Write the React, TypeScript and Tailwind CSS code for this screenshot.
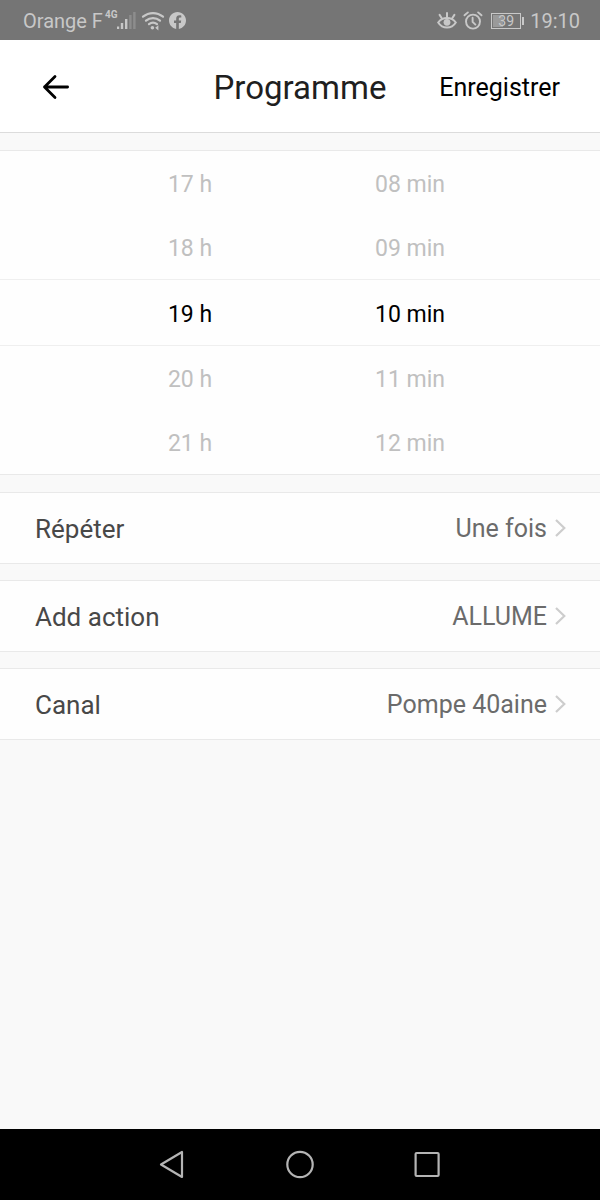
import { useState } from "react";

const HOURS = ["17 h", "18 h", "19 h", "20 h", "21 h"];
const MINUTES = ["08 min", "09 min", "10 min", "11 min", "12 min"];

const SETTINGS = [
  { id: "repeat", label: "Répéter", value: "Une fois" },
  { id: "action", label: "Add action", value: "ALLUME" },
  { id: "channel", label: "Canal", value: "Pompe 40aine" },
];

function SignalIcon() {
  return (
    <svg className="w-5 h-5" viewBox="0 0 20 20" fill="currentColor">
      <rect x="0" y="15.5" width="2.2" height="2.5" />
      <rect x="3.8" y="12" width="2.4" height="6" />
      <rect x="8" y="8" width="2.4" height="10" />
      <rect x="12.2" y="4" width="2.4" height="14" opacity="0.3" />
      <rect x="16.2" y="1" width="2.4" height="17" opacity="0.3" />
    </svg>
  );
}

function WifiIcon() {
  return (
    <svg
      className="w-6 h-5"
      viewBox="0 0 24 20"
      fill="none"
      stroke="currentColor"
      strokeWidth="2.2"
      strokeLinecap="round"
    >
      <path d="M2 5.7C8 0.9 16 0.9 22 5.7" />
      <path d="M5 9.7C9 6.2 15 6.2 19 9.7" />
      <path d="M8 13.2C10.4 11.2 13.6 11.2 16 13.2" />
      <circle cx="11.4" cy="16.8" r="1.8" fill="currentColor" stroke="none" />
      <path d="M14.2 16.8l3.2-2.6v5.2z" fill="currentColor" stroke="none" />
    </svg>
  );
}

function FacebookIcon() {
  return (
    <svg className="w-[17px] h-[17px]" viewBox="0 0 24 24" fill="currentColor">
      <path d="M24 12.07C24 5.4 18.63 0 12 0S0 5.4 0 12.07c0 6.03 4.39 11.02 10.13 11.93v-8.44H7.08v-3.49h3.05V9.41c0-3.02 1.79-4.69 4.53-4.69 1.31 0 2.68.24 2.68.24v2.97h-1.51c-1.49 0-1.95.93-1.95 1.88v2.26h3.32l-.53 3.49h-2.79V24C19.61 23.09 24 18.1 24 12.07z" />
    </svg>
  );
}

function EyeIcon() {
  return (
    <svg
      className="w-5 h-5"
      viewBox="0 0 20 20"
      fill="none"
      stroke="currentColor"
      strokeWidth="2"
      strokeLinecap="round"
    >
      <path d="M1.2 11.5C5.5 5.5 14.5 5.5 18.8 11.5C14.5 18.3 5.5 18.3 1.2 11.5z" />
      <path d="M10 1.9v4M2.6 3.9l2.2 3.4M17.4 3.9l-2.2 3.4" />
      <circle cx="10" cy="11.3" r="3.4" fill="currentColor" stroke="none" />
    </svg>
  );
}

function AlarmIcon() {
  return (
    <svg
      className="w-5 h-5"
      viewBox="0 0 20 20"
      fill="none"
      stroke="currentColor"
      strokeWidth="1.9"
      strokeLinecap="round"
    >
      <circle cx="10" cy="10.6" r="7" />
      <path d="M9.6 6.8v4l2.8 2.8M1.5 4.3L4.9 1.4M18.5 4.3L15.1 1.4" />
    </svg>
  );
}

function Battery() {
  return (
    <div className="flex items-center gap-px">
      <div className="relative flex items-center justify-center w-[30px] h-4 border border-current">
        <div className="absolute inset-y-px left-px w-2.5 bg-[#9a9a9a]" />
        <span className="relative text-[14px] leading-none">39</span>
      </div>
      <div className="w-0.5 h-2 bg-current" />
    </div>
  );
}

function StatusBar() {
  return (
    <div className="flex items-center justify-between h-10 pt-px pl-[23px] pr-5 bg-[#757575] text-[#c8c8c8]">
      <div className="flex items-center">
        <span className="text-xl leading-6">Orange F</span>
        <span className="self-start ml-0.5 text-[10px] leading-3 font-bold">
          4G
        </span>
        <SignalIcon />
        <div className="flex items-center gap-1 ml-1">
          <WifiIcon />
          <FacebookIcon />
        </div>
      </div>
      <div className="flex items-center gap-1.5">
        <div className="flex items-center gap-1.5 pr-0.5">
          <EyeIcon />
          <AlarmIcon />
        </div>
        <Battery />
        <span className="text-xl leading-6">19:10</span>
      </div>
    </div>
  );
}

function Header() {
  return (
    <header className="grid grid-cols-[1fr_auto_1fr] items-center h-[93px] px-10 bg-white border-b border-[#dcdcdc]">
      <button type="button" aria-label="Retour" className="justify-self-start">
        <svg
          className="w-8 h-8"
          viewBox="0 0 32 32"
          fill="none"
          stroke="black"
          strokeWidth="2.8"
          strokeLinecap="round"
          strokeLinejoin="round"
        >
          <path d="M15 6.6L4.5 17L15 27.4M4.5 17H27.6" />
        </svg>
      </button>
      <h1 className="pt-1 text-[33px] leading-10 text-[#1f1f1f]">Programme</h1>
      <button
        type="button"
        className="justify-self-end pt-1 text-[25px] leading-8 text-black"
      >
        Enregistrer
      </button>
    </header>
  );
}

function TimePicker() {
  const [hour, setHour] = useState(2);
  const [minute, setMinute] = useState(2);

  return (
    <div className="flex flex-col bg-[#fefefe] border-y border-[#e9e9e9]">
      {HOURS.map((h, i) => (
        <div
          key={h}
          className={
            i === 2
              ? "grid grid-cols-2 h-[67px] px-20 border-y border-[#efefef]"
              : "grid grid-cols-2 h-16 px-20"
          }
        >
          <button
            type="button"
            onClick={() => setHour(i)}
            className={
              i === hour
                ? "pt-1 text-[23px] leading-8 text-black"
                : "pt-1 text-[23px] leading-8 text-[#c0c0c0]"
            }
          >
            {h}
          </button>
          <button
            type="button"
            onClick={() => setMinute(i)}
            className={
              i === minute
                ? "pt-1 text-[23px] leading-8 text-black"
                : "pt-1 text-[23px] leading-8 text-[#c0c0c0]"
            }
          >
            {MINUTES[i]}
          </button>
        </div>
      ))}
    </div>
  );
}

function SettingRow({ label, value }: { label: string; value: string }) {
  return (
    <button
      type="button"
      className="flex items-center justify-between w-full h-[72px] pl-[35px] pr-8 bg-[#fefefe] border-y border-[#e9e9e9]"
    >
      <span className="pt-0.5 text-[26px] leading-8 text-[#484848]">
        {label}
      </span>
      <span className="flex items-center gap-1.5">
        <span className="pt-0.5 text-[25px] leading-8 text-[#6b6b6b]">
          {value}
        </span>
        <svg
          className="w-[15px] h-5"
          viewBox="0 0 15 20"
          fill="none"
          stroke="#cdcdcd"
          strokeWidth="2.2"
        >
          <path d="M3 2L11.3 10L3 18" />
        </svg>
      </span>
    </button>
  );
}

function NavBar() {
  return (
    <nav className="flex justify-center h-[71px] bg-black text-[#b4b4b4]">
      <button
        type="button"
        aria-label="Précédent"
        className="flex items-center justify-center w-32"
      >
        <svg
          className="w-8 h-8"
          viewBox="0 0 32 32"
          fill="none"
          stroke="currentColor"
          strokeWidth="2.2"
          strokeLinejoin="round"
        >
          <path d="M26 3V28L5 15.5z" />
        </svg>
      </button>
      <button
        type="button"
        aria-label="Accueil"
        className="flex items-center justify-center w-32"
      >
        <svg
          className="w-8 h-8"
          viewBox="0 0 32 32"
          fill="none"
          stroke="currentColor"
          strokeWidth="2.2"
        >
          <circle cx="16" cy="15.5" r="12.7" />
        </svg>
      </button>
      <button
        type="button"
        aria-label="Applications récentes"
        className="flex items-center justify-center w-32"
      >
        <svg
          className="w-8 h-8"
          viewBox="0 0 32 32"
          fill="none"
          stroke="currentColor"
          strokeWidth="2.2"
        >
          <rect x="3.6" y="4" width="23" height="23" rx="1" />
        </svg>
      </button>
    </nav>
  );
}

function App() {
  return (
    <div className="flex flex-col min-h-screen bg-[#f9f9f9] font-['Roboto',sans-serif]">
      <StatusBar />
      <Header />
      <main className="flex flex-col flex-1 gap-[17px] pt-[17px]">
        <TimePicker />
        <div className="flex flex-col gap-4">
          {SETTINGS.map((s) => (
            <SettingRow key={s.id} label={s.label} value={s.value} />
          ))}
        </div>
      </main>
      <NavBar />
    </div>
  );
}

export default App;
